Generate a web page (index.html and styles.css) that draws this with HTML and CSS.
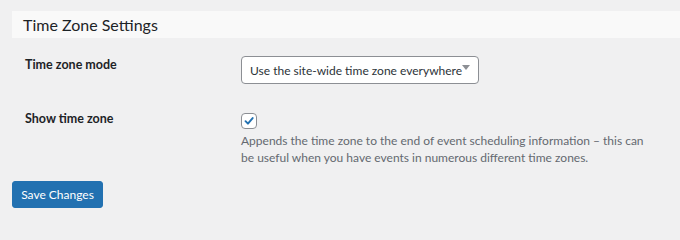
FILE: index.html
```html
<!DOCTYPE html>
<html>
<head>
<meta charset="utf-8">
<link rel="stylesheet" href="styles.css">
</head>
<body>
<div class="wrap">
  <h2 class="section-title">Time Zone Settings</h2>
  <div class="form-table">
    <div class="row row-mode">
      <div class="label">Time zone mode</div>
      <div class="field">
        <div class="select">
          <span class="select-text">Use the site-wide time zone everywhere</span>
          <span class="select-arrow"></span>
        </div>
      </div>
    </div>
    <div class="row row-show">
      <div class="label">Show time zone</div>
      <div class="field">
        <span class="checkbox">
          <svg viewBox="0 0 16 16" width="16" height="16"><path d="M4 8.2 L6.8 11 L12.2 4.6" fill="none" stroke="#2271b1" stroke-width="2.2" stroke-linecap="round" stroke-linejoin="round"/></svg>
        </span>
        <p class="description">Appends the time zone to the end of event scheduling information – this can be useful when you have events in numerous different time zones.</p>
      </div>
    </div>
  </div>
  <button class="button-primary">Save Changes</button>
</div>
</body>
</html>
```

FILE: styles.css
```css
html, body {
  margin: 0;
  padding: 0;
  background: #f0f0f1;
}
body {
  font-family: Lato, "Open Sans", sans-serif;
  font-size: 12px;
  color: #1d2327;
}
.wrap {
  padding: 11px 0 0 12px;
}
.section-title {
  margin: 0;
  height: 27px;
  line-height: 27px;
  padding-left: 11px;
  background: #f9f9f9;
  font-size: 16px;
  font-weight: 400;
  color: #1d2327;
}
.form-table {
  display: flex;
  flex-direction: column;
}
.row {
  display: grid;
  grid-template-columns: 229px 1fr;
}
.row-mode {
  margin-top: 18px;
  height: 54px;
}
.label {
  padding-left: 13px;
  font-size: 12.5px;
  font-weight: 700;
  line-height: 18px;
  color: #1d2327;
}
.row-mode .label {
  padding-top: 0;
}
.select {
  height: 26px;
  border: 1px solid #8c8f94;
  border-radius: 4px;
  background: #fff;
  display: flex;
  align-items: center;
  justify-content: space-between;
  padding: 0 8px 0 8px;
  box-sizing: content-box;
  width: 220px;
  color: #2c3338;
}
.select-text {
  white-space: nowrap;
}
.select-arrow {
  width: 0;
  height: 0;
  border-left: 4px solid transparent;
  border-right: 4px solid transparent;
  border-top: 5px solid #8c8f94;
  margin-top: -6px;
  margin-right: 2px;
}
.field {
  display: flex;
  flex-direction: column;
  align-items: flex-start;
}
.checkbox {
  margin-top: 3px;
  width: 14px;
  height: 14px;
  border: 1px solid #8c8f94;
  border-radius: 4px;
  background: #fff;
  display: flex;
  align-items: center;
  justify-content: center;
}
.checkbox svg {
  width: 14px;
  height: 14px;
}
.description {
  margin: 3px 0 0;
  line-height: 17px;
  color: #646970;
  max-width: 410px;
}
.button-primary {
  margin-top: 15px;
  width: 91px;
  height: 27px;
  padding: 0;
  border: 1px solid #2271b1;
  border-radius: 3px;
  background: #2271b1;
  color: #fff;
  font-family: inherit;
  font-size: 12px;
}
```
